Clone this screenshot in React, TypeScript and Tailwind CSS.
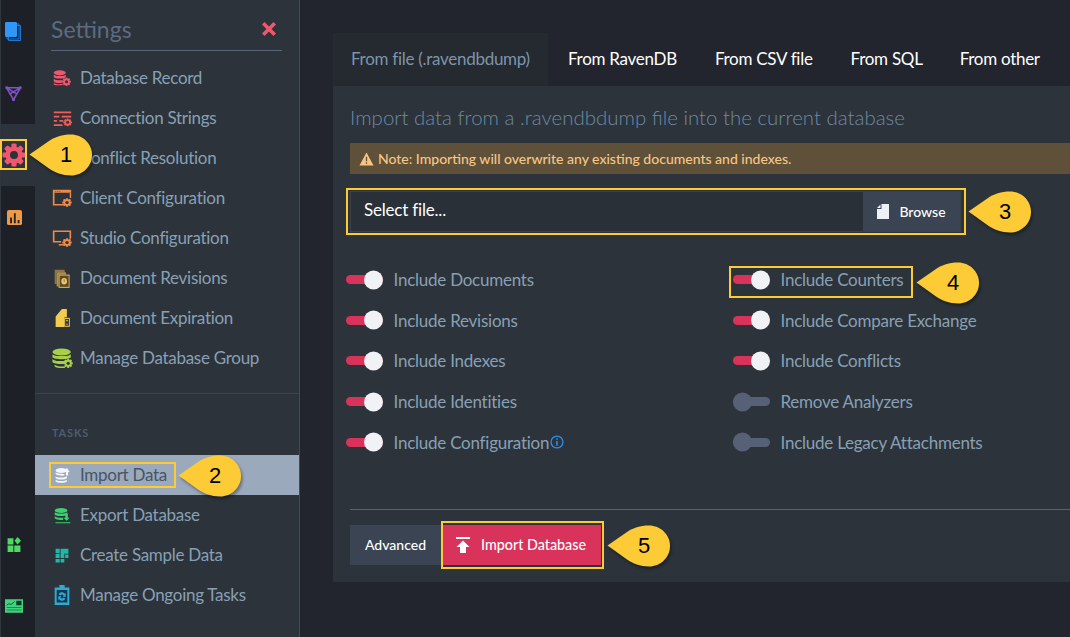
import React from "react";

type Ico = { children: React.ReactNode };
const Svg = ({ children, className = "" }: Ico & { className?: string }) => (
  <svg viewBox="0 0 24 24" preserveAspectRatio="none" className={`block ${className}`}>{children}</svg>
);

const Gear = ({ fill, hole, x = 12, y = 12, s = 1 }: { fill: string; hole: string; x?: number; y?: number; s?: number }) => (
  <g transform={`translate(${x} ${y}) scale(${s})`}>
    {[0, 45, 90, 135].map((a) => (
      <rect key={a} x="-2.6" y="-11.5" width="5.2" height="23" rx="1" fill={fill} transform={`rotate(${a})`} />
    ))}
    <circle r="8.6" fill={fill} />
    <circle r="4" fill={hole} />
  </g>
);

const Db = ({ fill, hole }: { fill: string; hole: string }) => (
  <>
    <ellipse cx="9" cy="5" rx="8" ry="3.5" fill={fill} />
    <path d="M1 7.5c2 2.4 14 2.4 16 0V11c-2 2.4-14 2.4-16 0z" fill={fill} />
    <path d="M1 13c2 2.4 10 2.4 12 1.5V18c-3 1-10 .8-12-1.5z" fill={fill} />
    <path d="M1 18.5c2 2 9 2 12 1.2V21c-3 1-10 1-12-.5z" fill={fill} />
    <Gear fill={fill} hole={hole} x={18} y={17} s={0.5} />
  </>
);

const P = "#2c333b";
const icons: Record<string, { node: React.ReactNode; cls: string }> = {
  record: { cls: "h-[18px] w-[18px]", node: <Db fill="#f0566e" hole={P} /> },
  conn: {
    cls: "h-[17px] w-[19px]",
    node: (
      <>
        <path d="M1 2h22v2.6H1zM1 8h7v2.600H1zM11 8h12v2.600H11zM1 14h4v2.600H1zM8 14h5v2.600H8zM1 20h11v2.600H1z" fill="#ee5f5b" />
        <Gear fill="#ee5f5b" hole={P} x={18.5} y={17.5} s={0.48} />
      </>
    ),
  },
  conflict: { cls: "h-[18px] w-[18px]", node: <path d="M2 3h20v18H2z" fill="#ee6a5a" /> },
  client: {
    cls: "h-[18px] w-[20px]",
    node: (
      <>
        <path d="M1 1h22v4H1zM1 1h2v19h11v2H1z" fill="#ec8a4a" />
        <path d="M21.300 5H23v7h-1.700z" fill="#ec8a4a" />
        <path d="M4 2.500h1v1H4zM6.500 2.500h1v1h-1zM9 2.500h1v1H9z" fill={P} />
        <Gear fill="#ec8a4a" hole={P} x={18} y={18} s={0.5} />
      </>
    ),
  },
  studio: {
    cls: "h-[18px] w-[20px]",
    node: (
      <>
        <path d="M1 2h22v11h-2V4H3v12h8v2H1z" fill="#ec8a4a" />
        <path d="M8 20h6v2H8z" fill="#ec8a4a" />
        <Gear fill="#ec8a4a" hole={P} x={18} y={18} s={0.5} />
      </>
    ),
  },
  revisions: {
    cls: "h-[19px] w-[16px]",
    node: (
      <>
        <path d="M1 1h15v3H4v15H1z" fill="#8d7644" />
        <path d="M4 4h14v3H7v15H4z" fill="#b09148" />
        <rect x="7.700" y="7.700" width="15" height="15.500" fill="#5a4a2c" stroke="#e6ad45" strokeWidth="1.400" />
        <circle cx="15.200" cy="15.500" r="4.200" fill="#e9c765" />
        <path d="M14.700 13h1v3h-1z" fill="#5a4a2c" />
      </>
    ),
  },
  expire: {
    cls: "h-[18px] w-[15px]",
    node: (
      <>
        <path d="M11 0h8v11h-4v13H1V10z" fill="#f2cc4f" />
        <rect x="15.500" y="12.500" width="7.500" height="10.500" fill="none" stroke="#f2cc4f" strokeWidth="1.400" />
        <path d="M17.500 15h3.400v1.300h-3.400zM17.500 19.500h3.400v1.300h-3.400z" fill="#f2cc4f" />
      </>
    ),
  },
  group: {
    cls: "h-[21px] w-[21px]",
    node: (
      <>
        <ellipse cx="11" cy="4.500" rx="10.500" ry="4" fill="#a9cf4a" />
        <path d="M0.500 7c2 3 19 3 21 0v3.500c-2 3-19 3-21 0z" fill="#a9cf4a" />
        <path d="M0.500 12.500c2 3 14 3 16 1.500v3.500c-3 1.500-14 1-16-1.500z" fill="#a9cf4a" />
        <path d="M3 19c2 2 9 2.500 12 2v1.600c-3 .8-10 .3-12-1.600z" fill="#a9cf4a" />
        <Gear fill="#a9cf4a" hole={P} x={18.500} y={17.500} s={0.46} />
      </>
    ),
  },
  importd: {
    cls: "h-[17px] w-[15px]",
    node: (
      <>
        <ellipse cx="10" cy="5" rx="9" ry="3.500" fill="#f4f6f8" />
        <path d="M1 7.500c2 2.400 14 2.400 14 2.400V12c-4 .5-12 0-14-2zM1 13c2 2.400 14 2.400 18 0v3c-2 2.400-16 2.400-18 0zM1 18c2 2.400 16 2.400 18 0v2.500c-2 2.400-16 2.400-18 0z" fill="#f4f6f8" />
        <path d="M19 1l4.500 6h-2.500v5h-3.500V7H14.500z" fill="#f4f6f8" />
      </>
    ),
  },
  exportd: {
    cls: "h-[17px] w-[17px]",
    node: (
      <>
        <ellipse cx="10" cy="5" rx="9" ry="3.500" fill="#3ecf6f" />
        <path d="M1 7.500c2 2.400 16 2.400 18 0V11c-2 2.400-16 2.400-18 0zM1 13c2 2.400 10 2.400 12 2v3c-3 .7-10 .5-12-2z" fill="#3ecf6f" />
        <path d="M16 10h3.500v5H22l-4.200 4.500L13.500 15H16zM2 21.500h21V23H2z" fill="#3ecf6f" />
      </>
    ),
  },
  sample: {
    cls: "h-[15px] w-[14px]",
    node: <path d="M1 1h7v7H1zM9.500 1H23v8h-7v7H9.500zM1 9.500h7V16H1zM17.500 10.500H23V16h-5.500zM1 17.500h7V23H1zM9.500 17.500H16V23H9.500z" fill="#1fb8a6" />,
  },
  ongoing: {
    cls: "h-[20px] w-[16px]",
    node: (
      <>
        <path d="M1 3h7V0h8v3h7v21H1z" fill="#2fa9d6" />
        <path d="M4 6h16v15H4z" fill="#16384a" />
        <path d="M7 11c2-3 7-3 9-.5l1.500-1v4.500h-4.500l1.500-1.500c-1.400-1.400-3.600-1.400-5 0zM17 16.500c-2 3-7 3-9 .5l-1.500 1v-4.500h4.500l-1.500 1.500c1.400 1.400 3.600 1.400 5 0z" fill="#2fa9d6" />
      </>
    ),
  },
};

const Item = ({ icon, label, active }: { icon: string; label: string; active?: boolean }) => (
  <div className={`flex h-10 items-center pl-[16px] ${active ? "bg-[#9aa9bb] text-[#475468]" : "text-[#88a0b4]"}`}>
    <span className="mr-[7px] flex w-[22px] justify-center">
      <Svg className={icons[icon].cls}>{icons[icon].node}</Svg>
    </span>
    <span className="pb-[2px] text-[17px] leading-none tracking-[-0.28px]">{label}</span>
  </div>
);

const Toggle = ({ on }: { on: boolean }) => (
  <span className={`relative mr-[10.500px] block h-[9px] w-[37px] rounded-full ${on ? "bg-[#d9335b]" : "bg-[#566178]"}`}>
    <span className={`absolute top-1/2 block h-[19px] w-[19px] -translate-y-1/2 rounded-full ${on ? "right-0 bg-[#f0f2f5]" : "left-0 bg-[#566178]"}`} />
  </span>
);

const Row = ({ on, label, info }: { on: boolean; label: string; info?: boolean }) => (
  <div className="flex h-[40.6px] items-center">
    <Toggle on={on} />
    <span className="text-[17px] leading-none tracking-[-0.24px] text-[#88a0b4]">{label}</span>
    {info && (
      <svg viewBox="0 0 16 16" className="ml-[1px] h-[14px] w-[14px]">
        <circle cx="8" cy="8" r="6.8" fill="none" stroke="#2a8fe8" strokeWidth="1.5" />
        <path d="M7.1 3.6h1.8v1.8H7.1zM7.1 6.8h1.8v5.6H7.1z" fill="#2a8fe8" />
      </svg>
    )}
  </div>
);

const SHAPE = "M0.500 20.500L20 7C26 3 33 0.500 42 0.500C53.500 0.500 63 9.500 63 21S53.500 41.500 42 41.500C33 41.500 26 38.500 20 34.500z";

const Callout = ({ n, left, top }: { n: number; left: number; top: number }) => (
  <div className="absolute h-[42px] w-[64px]" style={{ left, top }}>
    <svg viewBox="0 0 64 42" className="absolute inset-0 h-full w-full overflow-visible">
      <path d={SHAPE} fill="#000" opacity="0.35" transform="translate(1.500 2.500)" style={{ filter: "blur(1.5px)" }} />
      <path d={SHAPE} fill="#fdcb36" />
    </svg>
    <span className="absolute left-[24px] top-[7px] w-[26px] text-center text-[22px] leading-[28px] text-black [font-family:'Liberation_Sans',sans-serif]">{n}</span>
  </div>
);

const Outline = ({ l, t, w, h }: { l: number; t: number; w: number; h: number }) => (
  <div className="pointer-events-none absolute border-2 border-[#fdcb36]" style={{ left: l, top: t, width: w, height: h }} />
);

export default function App() {
  return (
    <div className="relative flex h-[637px] w-[1070px] overflow-hidden bg-[#22252d] [font-family:Lato,sans-serif]">
      {/* rail */}
      <div className="flex h-full w-[35px] flex-col border-l border-l-[#2f363e] bg-[#1d2027]">
        <div className="flex h-[62px] items-center justify-center">
          <svg viewBox="0 0 16 19" className="block h-[19px] w-[16px] -translate-x-[5px]">
            <path d="M3.500 3.500h12v15h-12z" fill="none" stroke="#1e78d8" strokeWidth="1" />
            <path d="M2 2h12v15H2z" fill="none" stroke="#1e78d8" strokeWidth="1" />
            <rect x="0" y="0" width="12" height="15" rx="1.200" fill="#2f97f5" />
          </svg>
        </div>
        <div className="flex h-[62px] items-center justify-center">
          <Svg className="h-[16px] w-[17px] -translate-x-[5px]">
            <path d="M2 4l20 0M2 4l10 18M22 4L12 22M2 4l14 9M22 4L6 14" fill="none" stroke="#8052c4" strokeWidth="2.200" />
            <circle cx="2.500" cy="4" r="2.200" fill="#8052c4" />
            <circle cx="21.500" cy="4" r="2.200" fill="#8052c4" />
            <circle cx="12" cy="22" r="2.200" fill="#8052c4" />
          </Svg>
        </div>
        <div className="flex h-[62px] items-center justify-center bg-[#2c333b]">
          <Svg className="h-6 w-6 -translate-x-[4px]"><Gear fill="#f0566e" hole="#2c333b" /></Svg>
        </div>
        <div className="flex h-[62px] items-center justify-center">
          <Svg className="h-[15px] w-[15px] -translate-x-[4px]">
            <rect x="0" y="0" width="24" height="24" rx="3" fill="#ef9a4a" />
            <path d="M5 12h3v9H5zM11 5h3v16h-3zM17 16h3v5h-3z" fill="#2a2320" />
          </Svg>
        </div>
        <div className="flex-1" />
        <div className="flex h-[62px] items-center justify-center pb-[2px]">
          <Svg className="h-[15px] w-[14px] -translate-x-[4px]">
            <path d="M1 2h10v10H1zM1 13.500h10V24H1zM12.500 13.500H23V24H12.500z" fill="#4cd964" />
            <path d="M18 0l6 6-6 6-5-6z" fill="#4cd964" />
          </Svg>
        </div>
        <div className="flex h-[61px] items-center justify-center pb-[2px]">
          <Svg className="h-[18px] w-[18px] -translate-x-[4px]">
            <rect x="0" y="3" width="24" height="18" fill="#3fd47c" />
            <path d="M2 11l3-2 3 1 5-4" fill="none" stroke="#15352a" strokeWidth="1" />
            <path d="M15 5h7v6h-7zM2 13.500h20v.8H2zM2 17h20v.8H2z" fill="#15352a" />
          </Svg>
        </div>
      </div>

      {/* sidebar */}
      <div className="flex h-full w-[265px] flex-col border-r border-r-[#414a55] bg-[#2c333b]">
        <div className="ml-[16px] mr-[17px] flex h-[51px] items-center justify-between border-b border-b-[#56657a] pt-[8px] pr-[5px]">
          <span className="text-[23px] leading-none text-[#5c6b81]">Settings</span>
          <svg viewBox="0 0 14 14" className="h-[16px] w-[16px]">
            <path d="M2 2l10 10M12 2L2 12" stroke="#f0566e" strokeWidth="3.200" />
          </svg>
        </div>
        <div className="pt-[7px]">
          <Item icon="record" label="Database Record" />
          <Item icon="conn" label="Connection Strings" />
          <Item icon="conflict" label="Conflict Resolution" />
          <Item icon="client" label="Client Configuration" />
          <Item icon="studio" label="Studio Configuration" />
          <Item icon="revisions" label="Document Revisions" />
          <Item icon="expire" label="Document Expiration" />
          <Item icon="group" label="Manage Database Group" />
        </div>
        <div className="mt-[15px] border-t border-t-[#3a444e] pl-[17px] pt-[32px] text-[11px] font-bold leading-[14px] tracking-[0.8px] text-[#4f5c72]">TASKS</div>
        <div className="pt-[15px]">
          <Item icon="importd" label="Import Data" active />
          <Item icon="exportd" label="Export Database" />
          <Item icon="sample" label="Create Sample Data" />
          <Item icon="ongoing" label="Manage Ongoing Tasks" />
        </div>
      </div>

      {/* main */}
      <div className="flex flex-1 flex-col pl-[33px] pt-[33px]">
        <div className="flex h-[53px] items-center text-[17px] leading-none tracking-[-0.28px] text-white">
          <div className="flex h-full w-[215px] items-center bg-[#252930] pb-[2px] pl-[18px] text-[#7c95aa]">From file (.ravendbdump)</div>
          <div className="pb-[2px] pl-[20px]">From RavenDB</div>
          <div className="pb-[2px] pl-[38px]">From CSV file</div>
          <div className="pb-[2px] pl-[38px]">From SQL</div>
          <div className="pb-[2px] pl-[37px]">From other</div>
        </div>
        <div className="h-[496px] bg-[#2c333b] pl-[17px]">
          <div className="pt-[18px] text-[20.450px] font-light leading-[26px] text-[#6d8aa3]">Import data from a .ravendbdump file into the current database</div>
          <div className="mt-[13px] flex h-[31px] items-center bg-[#5f5139] pl-[9px] text-[14px] font-medium leading-none text-[#f6c685]">
            <svg viewBox="0 0 16 15" className="mr-[4px] h-[14px] w-[15px]">
              <path d="M8 0.500L15.500 14.500H0.500z" fill="#f6c685" />
              <path d="M7.300 5h1.400v5H7.300zM7.300 11h1.400v1.500H7.300z" fill="#5f5139" />
            </svg>
            Note: Importing will overwrite any existing documents and indexes.
          </div>
          <div className="mt-[17px] flex h-[41px] w-[611px] border border-[#3a434d] bg-[#293037]">
            <div className="flex flex-1 items-center pb-[5px] pl-[13px] text-[17px] leading-none tracking-[-0.2px] text-white">Select file...</div>
            <div className="flex w-[97px] items-center justify-center bg-[#3a4453] text-[14px] font-medium leading-none text-white">
              <svg viewBox="0 0 12 15" className="mr-[10px] h-[15px] w-[12px]">
                <path d="M4.500 0H12v15H0V5h4.500z" fill="#edf1f7" />
                <path d="M3.500 0.500v3.500H0z" fill="#edf1f7" />
              </svg>
              Browse
            </div>
          </div>
          <div className="-ml-[4px] flex pt-[27.500px]">
            <div className="w-[387px]">
              <Row on label="Include Documents" />
              <Row on label="Include Revisions" />
              <Row on label="Include Indexes" />
              <Row on label="Include Identities" />
              <Row on label="Include Configuration" info />
            </div>
            <div>
              <Row on label="Include Counters" />
              <Row on label="Include Compare Exchange" />
              <Row on label="Include Conflicts" />
              <Row on={false} label="Remove Analyzers" />
              <Row on={false} label="Include Legacy Attachments" />
            </div>
          </div>
          <div className="mt-[46.500px] border-t border-t-[#5a626c]" />
          <div className="flex pt-[15px]">
            <div className="flex h-10 w-[91px] items-center justify-center bg-[#3a4453] text-[14px] font-medium leading-none text-white">Advanced</div>
            <div className="flex h-10 w-[160px] items-center justify-center bg-[#d9335b] text-[14.300px] font-medium leading-none text-white">
              <svg viewBox="0 0 14 16" className="mr-[11px] h-[16px] w-[14px]">
                <path d="M0 0h14v2H0zM7 3.500l6.500 6.500H10v6H4v-6H0.500z" fill="#fff" />
              </svg>
              Import Database
            </div>
          </div>
        </div>
      </div>

      {/* annotations over the shot */}
      <Outline l={0} t={139} w={27} h={31} />
      <Outline l={49} t={462} w={127} h={26} />
      <Outline l={346} t={188} w={620} h={47} />
      <Outline l={729} t={266} w={184} h={32} />
      <Outline l={441} t={521} w={163} h={48} />
      <Callout n={1} left={29} top={134} />
      <Callout n={2} left={178} top={455} />
      <Callout n={3} left={968} top={191} />
      <Callout n={4} left={916} top={262} />
      <Callout n={5} left={607} top={525} />
    </div>
  );
}
